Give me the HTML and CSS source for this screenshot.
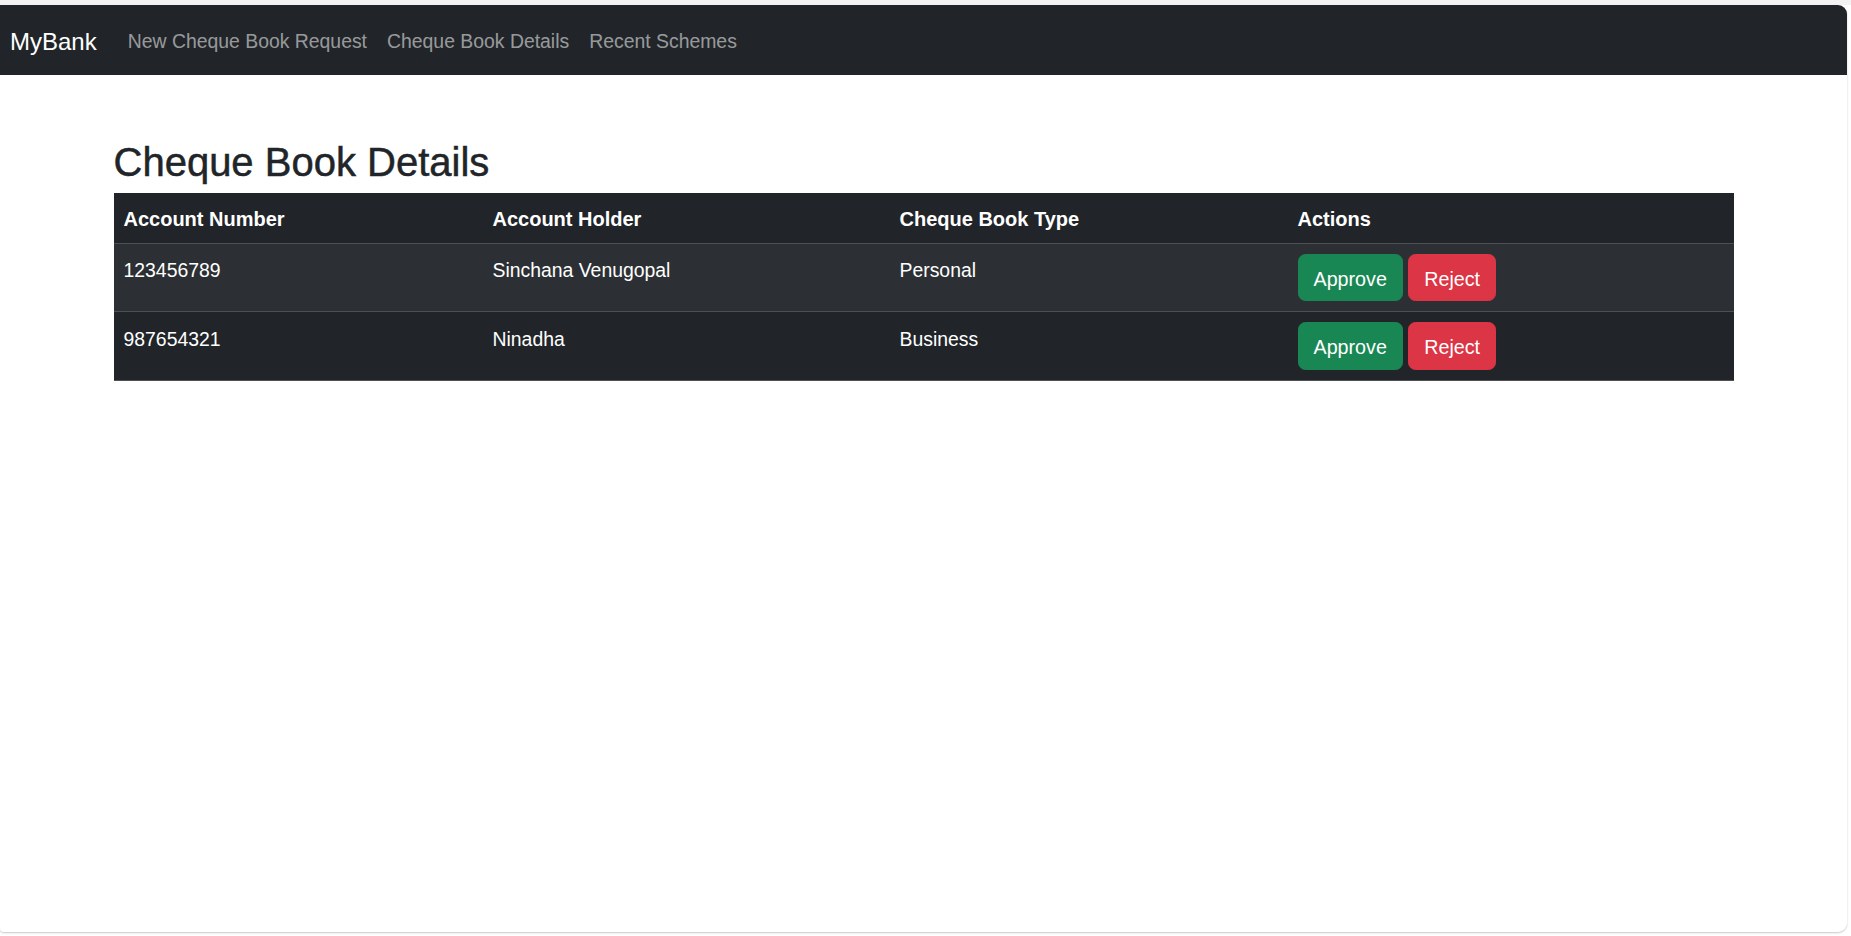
FILE: index.html
```html
<!DOCTYPE html>
<html lang="en">
<head>
<meta charset="utf-8">
<title>MyBank - Cheque Book Details</title>
<link rel="stylesheet" href="styles.css">
</head>
<body>
<div class="frame">
  <nav class="navbar">
    <a class="brand" href="#">MyBank</a>
    <ul class="nav">
      <li><a class="nav-link" href="#">New Cheque Book Request</a></li>
      <li><a class="nav-link" href="#">Cheque Book Details</a></li>
      <li><a class="nav-link" href="#">Recent Schemes</a></li>
    </ul>
  </nav>
  <main class="container">
    <h2 class="title">Cheque Book Details</h2>
    <table class="table">
      <thead>
        <tr>
          <th class="c1">Account Number</th>
          <th class="c2">Account Holder</th>
          <th class="c3">Cheque Book Type</th>
          <th class="c4">Actions</th>
        </tr>
      </thead>
      <tbody>
        <tr class="striped">
          <td>123456789</td>
          <td>Sinchana Venugopal</td>
          <td>Personal</td>
          <td class="actions"><button class="btn btn-success">Approve</button> <button class="btn btn-danger">Reject</button></td>
        </tr>
        <tr>
          <td>987654321</td>
          <td>Ninadha</td>
          <td>Business</td>
          <td class="actions"><button class="btn btn-success">Approve</button> <button class="btn btn-danger">Reject</button></td>
        </tr>
      </tbody>
    </table>
  </main>
</div>
</body>
</html>
```

FILE: styles.css
```css
* { box-sizing: border-box; }

html, body {
  margin: 0;
  height: 100%;
}

body {
  background: linear-gradient(#f3f3f3 0, #f3f3f3 5px, #ffffff 5px);
  font-family: "Liberation Sans", Arial, sans-serif;
  font-size: 19.4px;
  line-height: 1.5;
  color: #212529;
}

.frame {
  margin-top: 5px;
  width: 1847px;
  height: 927px;
  background: #ffffff;
  border-radius: 0 9px 9px 4px;
  box-shadow: 0 1px 2px rgba(0, 0, 0, 0.22);
  overflow: hidden;
}

.navbar {
  display: flex;
  align-items: center;
  height: 70px;
  padding: 10px 10px;
  background: #212529;
}

.brand {
  font-size: 24px;
  line-height: 37.5px;
  padding: 7.8px 0 4.7px;
  margin-right: 21px;
  color: #ffffff;
  text-decoration: none;
}

.nav {
  display: flex;
  list-style: none;
  margin: 0;
  padding: 0;
}

.nav-link {
  display: block;
  padding: 11.3px 10px 8.7px;
  line-height: 30px;
  color: rgba(255, 255, 255, 0.55);
  text-decoration: none;
}

.container {
  width: 1650px;
  margin: 0 auto;
  padding: 60px 15px 0;
}

.title {
  margin: 0 0 7.3px;
  padding-top: 2.7px;
  font-size: 40px;
  line-height: 48px;
  font-weight: 500;
  color: #212529;
  -webkit-text-stroke: 0.5px #212529;
}

.table {
  width: 100%;
  border-collapse: collapse;
  table-layout: fixed;
  background: #212529;
  color: #ffffff;
}

.table th,
.table td {
  padding: 11.3px 10px 8.7px;
  text-align: left;
  vertical-align: top;
  line-height: 30px;
  border-bottom: 1px solid #4d5154;
}

.table td.actions {
  padding: 10px 10px;
}

.table th {
  font-weight: 700;
  font-size: 20px;
}

.c1 { width: 369px; }
.c2 { width: 407px; }
.c3 { width: 398px; }
.c4 { width: 446px; }

.striped { background: #2c3034; }

.btn {
  display: inline-block;
  font-family: inherit;
  font-size: 19.7px;
  line-height: 30px;
  padding: 9px 15px 6.5px;
  border: 1px solid transparent;
  border-radius: 7.5px;
  color: #ffffff;
  cursor: pointer;
}

.btn-success {
  background: #198754;
  border-color: #198754;
}

.btn-danger {
  background: #dc3545;
  border-color: #dc3545;
}
```
